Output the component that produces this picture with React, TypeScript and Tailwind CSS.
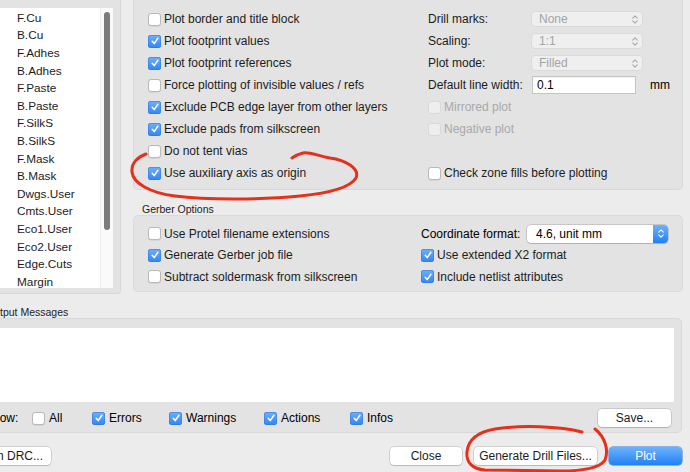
import React from "react";

function cx(...c: (string | false | undefined | null)[]) {
  return c.filter(Boolean).join(" ");
}

const LAYERS = [
  "F.Cu", "B.Cu", "F.Adhes", "B.Adhes", "F.Paste", "B.Paste", "F.SilkS", "B.SilkS",
  "F.Mask", "B.Mask", "Dwgs.User", "Cmts.User", "Eco1.User", "Eco2.User", "Edge.Cuts", "Margin",
];

function Check({ on, disabled }: { on?: boolean; disabled?: boolean }) {
  if (on) {
    return (
      <span className="flex size-[13px] shrink-0 items-center justify-center rounded-[3px] bg-linear-to-b from-[#6db0fc] to-[#2f84f5] shadow-[inset_0_0_0_0.5px_#2f77d6]">
        <svg viewBox="0 0 10 10" className="size-[10px]">
          <path d="M2.2 5.3 L4.2 7.6 L7.9 2.3" fill="none" stroke="#fff" strokeWidth="1.5" strokeLinecap="round" strokeLinejoin="round" />
        </svg>
      </span>
    );
  }
  return (
    <span
      className={cx(
        "size-[13px] shrink-0 rounded-[3px] border",
        disabled ? "border-[#d9d9d9] bg-[#eeeeee]" : "border-[#b9b9b9] bg-white shadow-[0_0.5px_0.5px_rgba(0,0,0,0.12)]",
      )}
    />
  );
}

function CheckRow({ label, on, disabled, h = "h-[22px]" }: { label: string; on?: boolean; disabled?: boolean; h?: string }) {
  return (
    <div className={cx("flex items-center gap-[3px]", h)}>
      <Check on={on} disabled={disabled} />
      <span className={disabled ? "text-[#a9a9a9]" : "text-[#1c1c1c]"}>{label}</span>
    </div>
  );
}

function Chevrons({ color }: { color: string }) {
  return (
    <svg viewBox="0 0 8 12" className="h-[11px] w-[8px]">
      <path d="M1.5 4.5 L4 2 L6.5 4.5 M1.5 7.5 L4 10 L6.5 7.5" fill="none" stroke={color} strokeWidth="1.1" strokeLinecap="round" strokeLinejoin="round" />
    </svg>
  );
}

function DisabledPopup({ value }: { value: string }) {
  return (
    <div className="flex h-[16px] w-[112px] items-center justify-between rounded-[4px] border border-[#dadada] bg-[#efefef] pl-[7px] pr-[3px] text-[#a4a4a4]">
      <span>{value}</span>
      <Chevrons color="#a8a8a8" />
    </div>
  );
}

function Btn({ children, className, primary }: { children: React.ReactNode; className?: string; primary?: boolean }) {
  return (
    <button
      type="button"
      className={cx(
        "flex h-[18px] items-center justify-center rounded-[4px]",
        primary
          ? "bg-linear-to-b from-[#6bb2fb] to-[#1c80f6] text-white shadow-[0_0_0_0.5px_#2a78e0]"
          : "bg-white text-[#1c1c1c] shadow-[0_0_0_0.5px_rgba(0,0,0,0.22),0_1px_1px_rgba(0,0,0,0.12)]",
        className,
      )}
    >
      {children}
    </button>
  );
}

function FormRow({ label, children, w }: { label: string; children: React.ReactNode; w: string }) {
  return (
    <div className="flex h-[22px] items-center">
      <span className={cx("shrink-0 text-[#1c1c1c]", w)}>{label}</span>
      {children}
    </div>
  );
}

export default function App() {
  return (
    <div className="relative h-[472px] w-[690px] overflow-hidden bg-[#ececec] font-['Liberation_Sans',Arial,sans-serif] text-[12px] leading-none">
      {/* top: layer list + options */}
      <div className="flex h-[294px]">
        <div className="h-[294px] w-[121px] shrink-0 rounded-br-[4px] border-b border-r border-[#d8d8d8] bg-[#e3e3e3] pb-[5px] pr-[7px] pt-[8px]">
          <div className="flex h-full bg-white">
            <ul className="flex-1 pl-[17px] pt-[2px] text-[11.8px] text-[#1c1c1c]">
              {LAYERS.map((l) => (
                <li key={l} className="flex h-[17.6px] items-center">
                  {l}
                </li>
              ))}
            </ul>
            <div className="w-[13px] border-l border-[#ececec] bg-[#fafafa] px-[3px] pt-[4px]">
              <div className="h-[218px] w-[6px] rounded-full bg-[#7c7c7c]" />
            </div>
          </div>
        </div>

        <div className="ml-[12px] w-[550px] shrink-0">
          <div className="flex h-[190px] rounded-b-[5px] border border-t-0 border-[#d9d9d9] bg-[#e3e3e3] pl-[14px] pt-[8px]">
            <div className="w-[280px] shrink-0">
              <CheckRow label="Plot border and title block" />
              <CheckRow label="Plot footprint values" on />
              <CheckRow label="Plot footprint references" on />
              <CheckRow label="Force plotting of invisible values / refs" />
              <CheckRow label="Exclude PCB edge layer from other layers" on />
              <CheckRow label="Exclude pads from silkscreen" on />
              <CheckRow label="Do not tent vias" />
              <CheckRow label="Use auxiliary axis as origin" on />
            </div>
            <div className="flex-1">
              <FormRow label="Drill marks:" w="w-[103px]">
                <DisabledPopup value="None" />
              </FormRow>
              <FormRow label="Scaling:" w="w-[103px]">
                <DisabledPopup value="1:1" />
              </FormRow>
              <FormRow label="Plot mode:" w="w-[103px]">
                <DisabledPopup value="Filled" />
              </FormRow>
              <FormRow label="Default line width:" w="w-[104px]">
                <div className="flex h-[18px] w-[104px] items-center border border-[#c4c4c4] bg-white pl-[4px] shadow-[inset_0_1px_1px_rgba(0,0,0,0.06)]">
                  0.1
                </div>
                <span className="ml-[14px]">mm</span>
              </FormRow>
              <CheckRow label="Mirrored plot" disabled />
              <CheckRow label="Negative plot" disabled />
              <div className="h-[22px]" />
              <CheckRow label="Check zone fills before plotting" />
            </div>
          </div>

          <div className="flex h-[25px] items-end pb-[1px] pl-[9px] text-[10.5px] text-[#1c1c1c]">Gerber Options</div>

          <div className="flex h-[77px] rounded-[5px] border border-[#d9d9d9] bg-[#e3e3e3] pl-[14px] pt-[7px]">
            <div className="w-[273px] shrink-0">
              <CheckRow label="Use Protel filename extensions" h="h-[21.5px]" />
              <CheckRow label="Generate Gerber job file" on h="h-[21.5px]" />
              <CheckRow label="Subtract soldermask from silkscreen" h="h-[21.5px]" />
            </div>
            <div className="flex-1">
              <div className="flex h-[21.5px] items-center">
                <span className="w-[106px] shrink-0">Coordinate format:</span>
                <div className="flex h-[18px] w-[141px] items-center justify-between rounded-[4px] bg-white pl-[9px] shadow-[0_0_0_0.5px_rgba(0,0,0,0.25),0_1px_1px_rgba(0,0,0,0.1)]">
                  <span>4.6, unit mm</span>
                  <span className="flex h-full w-[15px] items-center justify-center rounded-r-[4px] bg-linear-to-b from-[#6bb2fb] to-[#1c80f6]">
                    <Chevrons color="#fff" />
                  </span>
                </div>
              </div>
              <CheckRow label="Use extended X2 format" on h="h-[21.5px]" />
              <CheckRow label="Include netlist attributes" on h="h-[21.5px]" />
            </div>
          </div>
        </div>
      </div>

      {/* output messages */}
      <div className="-ml-[14px] flex h-[24px] items-end pb-[1px] text-[10.5px] text-[#1c1c1c]">Output Messages</div>
      <div className="-ml-[20px] h-[115px] w-[702px] rounded-[5px] border border-[#d9d9d9] bg-[#e3e3e3] pl-[4px] pr-[7px] pt-[9px]">
        <div className="h-[74px] bg-white" />
        <div className="flex h-[31px] items-center pr-[3px] pt-[1px]">
          <span className="w-[47px] shrink-0">Show:</span>
          <div className="flex w-[60px] shrink-0 items-center gap-[4px]"><Check /><span>All</span></div>
          <div className="flex w-[77px] shrink-0 items-center gap-[4px]"><Check on /><span>Errors</span></div>
          <div className="flex w-[95px] shrink-0 items-center gap-[4px]"><Check on /><span>Warnings</span></div>
          <div className="flex w-[86px] shrink-0 items-center gap-[4px]"><Check on /><span>Actions</span></div>
          <div className="flex flex-1 items-center gap-[4px]"><Check on /><span>Infos</span></div>
          <Btn className="w-[73px]">Save...</Btn>
        </div>
      </div>

      {/* dialog buttons */}
      <div className="mt-[14px] flex items-center pr-[8px]">
        <Btn className="-ml-[40px] w-[91px] justify-end! pr-[8px]">Run DRC...</Btn>
        <div className="flex-1" />
        <Btn className="w-[72px]">Close</Btn>
        <Btn className="ml-[12px] w-[123px]">Generate Drill Files...</Btn>
        <Btn primary className="ml-[12px] w-[73px]">Plot</Btn>
      </div>

      {/* red hand-drawn annotations */}
      <svg className="pointer-events-none absolute inset-0" width="690" height="472" viewBox="0 0 690 472">
        <path
          d="M146 154 C138 157 131 163 132 172 C133 183 150 193 175 196 C205 200 260 200 300 196 C330 193 350 188 356 178 C360 168 345 160 330 158 C318 156 308 151 303 153 C299 154 295 156 292 158"
          fill="none" stroke="#e5301c" strokeWidth="3" strokeLinecap="round" strokeLinejoin="round"
        />
        <path
          d="M582 432 C560 426 520 425 495 429 C478 432 468 440 467 452 C466 462 472 469 485 470 L560 471 C585 471 600 468 605 460 C609 450 605 437 595 429"
          fill="none" stroke="#e5301c" strokeWidth="3" strokeLinecap="round" strokeLinejoin="round"
        />
      </svg>
    </div>
  );
}
